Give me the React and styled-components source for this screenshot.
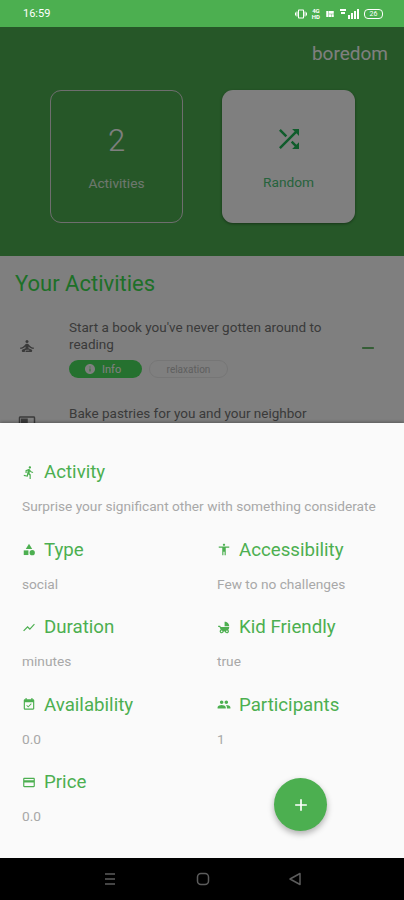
import React from 'react';
import styled, { createGlobalStyle } from 'styled-components';
import {
  MdAccessibility,
  MdAdd,
  MdCategory,
  MdChildFriendly,
  MdDirectionsRun,
  MdEventAvailable,
  MdInfo,
  MdOutlineFeaturedVideo,
  MdPayment,
  MdPeople,
  MdRemove,
  MdSelfImprovement,
  MdShowChart,
  MdShuffle,
  MdVibration,
  MdViewQuilt,
} from 'react-icons/md';

const GREEN = '#4caf50';

const GlobalStyle = createGlobalStyle`
  html, body {
    margin: 0;
    padding: 0;
    background: #000;
  }
  * {
    box-sizing: border-box;
  }
`;

const Phone = styled.div`
  position: relative;
  width: 404px;
  height: 900px;
  overflow: hidden;
  background: #fff;
  font-family: Roboto, "Liberation Sans", sans-serif;
`;

const StatusBar = styled.div`
  position: relative;
  z-index: 3;
  height: 27px;
  padding: 0 21px 0 23px;
  display: flex;
  align-items: center;
  justify-content: space-between;
  background: ${GREEN};
  color: #fff;
  font-size: 11px;
`;

const StatusIcons = styled.div`
  display: flex;
  align-items: center;
  gap: 5px;
`;

const TinyStack = styled.span`
  font-size: 6px;
  font-weight: 700;
  line-height: 6px;
  text-align: center;
`;

const Battery = styled.span`
  width: 19px;
  height: 10px;
  border: 1px solid #fff;
  border-radius: 4px;
  font-size: 7px;
  line-height: 8px;
  text-align: center;
`;

const Header = styled.header`
  height: 229px;
  padding: 15px 16px 0;
  background: ${GREEN};
`;

const Brand = styled.div`
  text-align: right;
  color: #fff;
  font-size: 19px;
  line-height: 24px;
`;

const Cards = styled.div`
  margin: 24px 33px 0 34px;
  display: flex;
  justify-content: space-between;
`;

const Card = styled.div`
  width: 133px;
  height: 133px;
  display: flex;
  flex-direction: column;
  align-items: center;
  border-radius: 11px;
  border: ${({ $filled }) => ($filled ? 'none' : '1px solid #ddd')};
  background: ${({ $filled }) => ($filled ? '#fff' : 'transparent')};
  color: ${({ $filled }) => ($filled ? '#20b858' : '#fff')};
  box-shadow: ${({ $filled }) => ($filled ? '0 1px 3px rgba(0,0,0,.4)' : 'none')};
`;

const CardValue = styled.div`
  height: 34px;
  margin-top: 32px;
  display: flex;
  align-items: center;
  font-size: 31px;
  font-weight: 300;
`;

const CardLabel = styled.div`
  margin-top: 17px;
  font-size: 13.7px;
  line-height: 18px;
  opacity: 0.8;
`;

const ListTitle = styled.h2`
  margin: 0;
  padding: 15px 15px 0;
  color: #3ce050;
  font-size: 22px;
  font-weight: 400;
  line-height: 26px;
`;

const Row = styled.div`
  padding: ${({ $first }) => ($first ? '22px' : '27px')} 26px 0 18px;
  display: flex;
  align-items: center;
  color: #757575;
`;

const RowIcon = styled.div`
  width: 51px;
  flex: none;
  display: flex;
  margin-bottom: 6px;
  font-size: 18px;
`;

const RowBody = styled.div`
  flex: 1;
  font-size: 13.5px;
  line-height: 17px;
`;

const Chips = styled.div`
  margin-top: 7px;
  display: flex;
  gap: 7px;
`;

const InfoChip = styled.span`
  width: 73px;
  height: 18px;
  padding-left: 15px;
  display: flex;
  align-items: center;
  gap: 6px;
  border-radius: 9px;
  background: #4be25e;
  color: #fff;
  font-size: 11px;
`;

const TagChip = styled.span`
  width: 79px;
  height: 18px;
  display: flex;
  align-items: center;
  justify-content: center;
  border: 1px solid #ececec;
  border-radius: 9px;
  color: #c0c0c0;
  font-size: 10px;
`;

const Collapse = styled.div`
  display: flex;
  margin-bottom: 1px;
  color: ${GREEN};
  font-size: 20px;
`;

const Scrim = styled.div`
  position: absolute;
  inset: 27px 0 0;
  z-index: 1;
  background: rgba(0, 0, 0, 0.5);
`;

const Sheet = styled.section`
  position: absolute;
  left: 0;
  right: 0;
  top: 423px;
  bottom: 42px;
  z-index: 2;
  padding: 37px 0 0 22px;
  background: #fafafa;
  box-shadow: 0 -1px 3px rgba(0, 0, 0, 0.3);
`;

const Details = styled.div`
  display: grid;
  grid-template-columns: 195px 1fr;
  row-gap: 23.6px;
`;

const Field = styled.div`
  grid-column: ${({ $wide }) => ($wide ? '1 / -1' : 'auto')};
`;

const FieldTitle = styled.div`
  height: 24px;
  display: flex;
  align-items: center;
  gap: 8px;
  color: ${GREEN};
  font-size: 18.7px;
  white-space: nowrap;
`;

const FieldIcon = styled.span`
  width: 14px;
  display: flex;
  justify-content: center;
  font-size: 15px;
`;

const FieldValue = styled.div`
  margin-top: 15px;
  height: 15px;
  color: #a8a8a8;
  font-size: 13.7px;
  line-height: 15px;
  white-space: nowrap;
`;

const Fab = styled.button`
  position: absolute;
  left: 274px;
  top: 355px;
  width: 53px;
  height: 53px;
  padding: 0;
  border: none;
  border-radius: 50%;
  display: flex;
  align-items: center;
  justify-content: center;
  background: ${GREEN};
  color: #fff;
  font-size: 20px;
  box-shadow: 0 3px 6px rgba(0, 0, 0, 0.3);
`;

const NavBar = styled.nav`
  position: absolute;
  left: 0;
  right: 0;
  bottom: 0;
  z-index: 3;
  height: 42px;
  padding: 0 102px;
  display: flex;
  align-items: center;
  justify-content: space-between;
  background: #000;
`;

const NavGlyph = () => (
  <svg width="16" height="14" viewBox="0 0 16 14" fill="none" stroke="#5c5c5c" strokeWidth="1.5">
    <path d="M3 2h10M3 7h10M3 12h10" />
  </svg>
);

const NavHome = () => (
  <svg width="14" height="14" viewBox="0 0 14 14" fill="none" stroke="#5c5c5c" strokeWidth="1.5">
    <rect x="1.5" y="1.5" width="11" height="11" rx="3.5" />
  </svg>
);

const NavBack = () => (
  <svg width="14" height="14" viewBox="0 0 14 14" fill="none" stroke="#5c5c5c" strokeWidth="1.5" strokeLinejoin="round">
    <path d="M2 7l10-5.5v11z" />
  </svg>
);

const SignalBars = () => (
  <svg width="19" height="10" viewBox="0 0 19 10" fill="#fff">
    <rect x="0" y="0" width="6" height="2" />
    <rect x="1" y="3" width="4" height="2" />
    <rect x="8" y="6" width="2" height="4" />
    <rect x="11" y="4" width="2" height="6" />
    <rect x="14" y="2" width="2" height="8" />
    <rect x="17" y="0" width="2" height="10" />
  </svg>
);

const fields = [
  { icon: <MdCategory />, title: 'Type', value: 'social' },
  { icon: <MdAccessibility />, title: 'Accessibility', value: 'Few to no challenges' },
  { icon: <MdShowChart />, title: 'Duration', value: 'minutes' },
  { icon: <MdChildFriendly />, title: 'Kid Friendly', value: 'true' },
  { icon: <MdEventAvailable />, title: 'Availability', value: '0.0' },
  { icon: <MdPeople />, title: 'Participants', value: '1' },
  { icon: <MdPayment />, title: 'Price', value: '0.0' },
];

const App = () => (
  <>
    <GlobalStyle />
    <Phone>
      <StatusBar>
        <span>16:59</span>
        <StatusIcons>
          <MdVibration size={12} />
          <TinyStack>
            4G
            <br />
            HD
          </TinyStack>
          <MdViewQuilt size={10} />
          <SignalBars />
          <Battery>26</Battery>
        </StatusIcons>
      </StatusBar>

      <Header>
        <Brand>boredom</Brand>
        <Cards>
          <Card>
            <CardValue>2</CardValue>
            <CardLabel>Activities</CardLabel>
          </Card>
          <Card $filled>
            <CardValue>
              <MdShuffle size={30} />
            </CardValue>
            <CardLabel>Random</CardLabel>
          </Card>
        </Cards>
      </Header>

      <ListTitle>Your Activities</ListTitle>
      <Row $first>
        <RowIcon>
          <MdSelfImprovement />
        </RowIcon>
        <RowBody>
          Start a book you've never gotten around to reading
          <Chips>
            <InfoChip>
              <MdInfo size={12} />
              Info
            </InfoChip>
            <TagChip>relaxation</TagChip>
          </Chips>
        </RowBody>
        <Collapse>
          <MdRemove />
        </Collapse>
      </Row>
      <Row>
        <RowIcon>
          <MdOutlineFeaturedVideo />
        </RowIcon>
        <RowBody>
          Bake pastries for you and your neighbor
          <Chips>
            <InfoChip>
              <MdInfo size={12} />
              Info
            </InfoChip>
          </Chips>
        </RowBody>
      </Row>

      <Scrim />

      <Sheet>
        <Details>
          <Field $wide>
            <FieldTitle>
              <FieldIcon>
                <MdDirectionsRun />
              </FieldIcon>
              Activity
            </FieldTitle>
            <FieldValue>Surprise your significant other with something considerate</FieldValue>
          </Field>
          {fields.map((field) => (
            <Field key={field.title}>
              <FieldTitle>
                <FieldIcon>{field.icon}</FieldIcon>
                {field.title}
              </FieldTitle>
              <FieldValue>{field.value}</FieldValue>
            </Field>
          ))}
        </Details>
        <Fab aria-label="Add">
          <MdAdd />
        </Fab>
      </Sheet>

      <NavBar>
        <NavGlyph />
        <NavHome />
        <NavBack />
      </NavBar>
    </Phone>
  </>
);

export default App;
